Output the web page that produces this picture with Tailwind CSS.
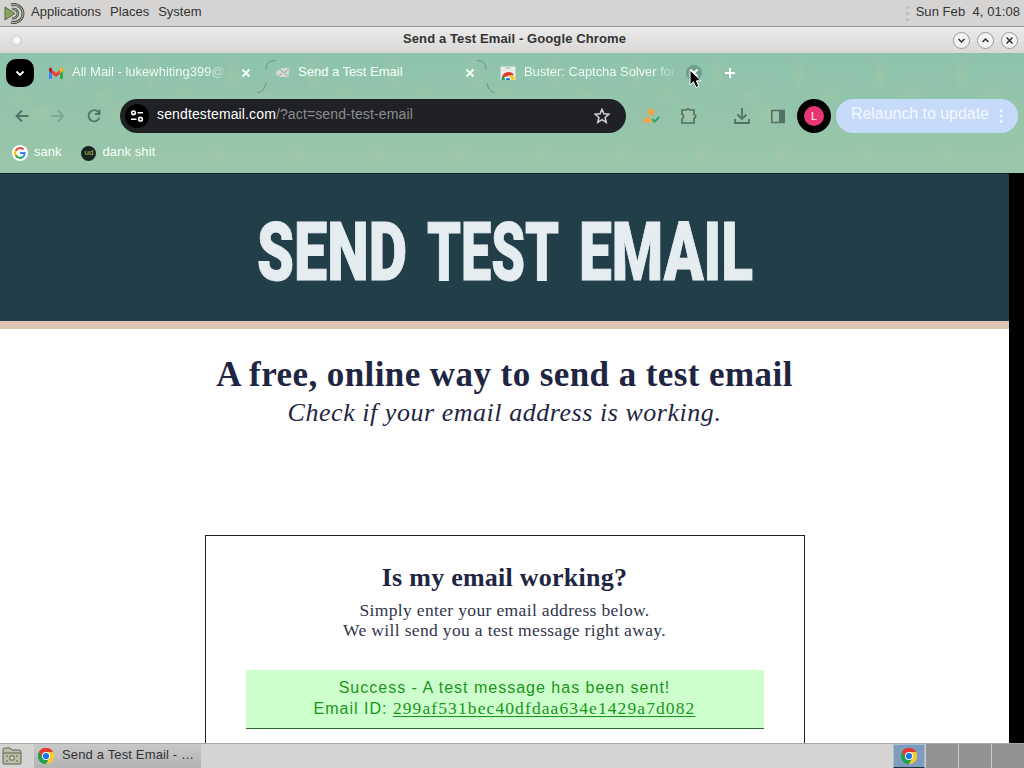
<!DOCTYPE html>
<html lang="en">
  <head>
    <meta charset="UTF-8" />
    <meta name="viewport" content="width=device-width, initial-scale=1.0" />
    <title>Send a Test Email</title>
    <script src="https://cdn.jsdelivr.net/npm/@tailwindcss/browser@4"></script>
  </head>
  <body class="flex h-[768px] w-[1024px] flex-col overflow-hidden bg-black font-['Liberation_Sans',sans-serif] text-[13px] text-[#333]">
    <!-- shared icons -->
    <svg class="hidden">
      <symbol id="chrome" viewBox="0 0 48 48">
        <path d="M24 24 3.2 12A24 24 0 0 1 44.8 12Z" fill="#e33b2e" />
        <path d="M24 24 44.8 12A24 24 0 0 1 24 48Z" fill="#fcc934" />
        <path d="M24 24V48A24 24 0 0 1 3.2 12Z" fill="#24a050" />
        <path d="M24 12H44.8A24 24 0 0 0 3.2 12L13.6 30Z" fill="#e33b2e" />
        <path d="M34.4 30 24 48A24 24 0 0 0 44.8 12H24Z" fill="#fcc934" />
        <path d="M13.6 30 3.2 12A24 24 0 0 0 24 48L34.4 30Z" fill="#24a050" />
        <circle cx="24" cy="24" r="12" fill="#fff" />
        <circle cx="24" cy="24" r="9.3" fill="#1a73e8" />
      </symbol>
      <symbol id="close" viewBox="0 0 10 10">
        <path d="M1.5 1.5 8.5 8.5M8.5 1.5 1.5 8.5" fill="none" stroke="currentColor" stroke-width="1.9" />
      </symbol>
    </svg>

    <!-- desktop panel -->
    <header class="flex h-[27px] shrink-0 items-center border-b border-[#979797] bg-[#d5d4d3] pr-1 pb-[3px] pl-1">
      <svg class="mt-[3px] mr-[6px] h-[21px] w-[21px]" viewBox="0 0 21 21" fill="none">
        <path d="M7 2A9 9 0 1 1 7 19" stroke="#4e5547" stroke-width="3" />
        <path d="M7 2A9 9 0 1 1 7 19" stroke="#b9c3a4" stroke-width="1" />
        <path d="M8 6.2A4.6 4.6 0 1 1 8 15" stroke="#4e5547" stroke-width="2.6" />
        <path d="M8 6.2A4.6 4.6 0 1 1 8 15" stroke="#b9c3a4" stroke-width=".8" />
        <path d="M1 4 11 10.5 1 17Z" fill="#87a556" stroke="#5c6550" />
      </svg>
      <nav class="flex gap-[9px]">
        <span>Applications</span>
        <span>Places</span>
        <span>System</span>
      </nav>
      <div class="mt-1 mr-[7px] ml-auto flex flex-col gap-[3px]">
        <i class="h-[3px] w-[3px] rounded-full bg-[#bbb]"></i>
        <i class="h-[3px] w-[3px] rounded-full bg-[#bbb]"></i>
        <i class="h-[3px] w-[3px] rounded-full bg-[#bbb]"></i>
      </div>
      <span class="tracking-[0.06px] whitespace-pre">Sun Feb  4, 01:08</span>
    </header>

    <!-- window title -->
    <div class="flex h-[26px] shrink-0 items-center bg-linear-to-b from-[#ebebea] to-[#d9d8d7] pr-[6px] pl-[11px]">
      <span class="flex h-[11px] w-[11px] items-center justify-center rounded-full border border-[#c9c9c9] bg-[#eee]"><i class="h-1 w-1 rounded-full bg-white"></i></span>
      <span class="ml-[54px] flex-1 pb-[2px] text-center font-bold tracking-[0.11px]">Send a Test Email - Google Chrome</span>
      <div class="flex gap-[7px]">
        <svg class="h-[17px] w-[17px]" viewBox="0 0 17 17" fill="none" stroke="#333" stroke-width="1.5"><circle cx="8.5" cy="8.5" r="8" fill="#f3f3f3" stroke="#999" stroke-width="1" /><path d="m5.5 7 3 3 3-3" /></svg>
        <svg class="h-[17px] w-[17px]" viewBox="0 0 17 17" fill="none" stroke="#333" stroke-width="1.5"><circle cx="8.5" cy="8.5" r="8" fill="#f3f3f3" stroke="#999" stroke-width="1" /><path d="m5.5 10 3-3 3 3" /></svg>
        <svg class="h-[17px] w-[17px]" viewBox="0 0 17 17" fill="none" stroke="#333" stroke-width="1.5"><circle cx="8.5" cy="8.5" r="8" fill="#f3f3f3" stroke="#999" stroke-width="1" /><path d="m5.5 5.5 6 6m0-6-6 6" /></svg>
      </div>
    </div>

    <div class="relative flex h-[120px] shrink-0 flex-col bg-linear-to-b from-[#8dc3ad] to-[#9bc6a9]">
      <!-- theme texture -->
      <svg class="absolute inset-0 h-full w-full opacity-30" viewBox="0 0 1024 120">
        <defs>
          <filter id="soft"><feGaussianBlur stdDeviation="4" /></filter>
          <pattern id="leaf" width="81" height="120" patternUnits="userSpaceOnUse">
            <g fill="#b9cd9c" filter="url(#soft)">
              <ellipse cx="70" cy="22" rx="4" ry="16" />
              <ellipse cx="55" cy="103" rx="8" ry="6" />
              <ellipse cx="40" cy="60" rx="10" ry="7" />
              <ellipse cx="20" cy="42" rx="9" ry="4" />
            </g>
          </pattern>
        </defs>
        <rect width="1024" height="120" fill="url(#leaf)" />
      </svg>

      <!-- tabs -->
      <div class="relative flex h-10 items-center pl-[6px] text-[#f6fffa]">
        <span class="flex h-7 w-7 items-center justify-center rounded-[10px] bg-black">
          <svg class="h-3 w-3" viewBox="0 0 12 12" fill="none" stroke="#fff" stroke-width="1.8"><path d="m2.5 4.5 3.5 3.5 3.5-3.5" /></svg>
        </span>
        <div class="ml-[14px] flex w-[202px] items-center">
          <svg class="h-[15px] w-4" viewBox="0 0 16 13">
            <path d="M1 12V2.5l3 2.2V12Z" fill="#4285f4" />
            <path d="M12 12V4.7l3-2.2V12Z" fill="#34a853" />
            <path d="M4 7V3l4 3 4-3v4l-4 3Z" fill="#ea4335" />
            <path d="M1 4V2.3C1 .8 2.6.5 3.6 1.3L4 1.6v4.6Z" fill="#b8232a" />
            <path d="M15 4V2.3c0-1.5-1.6-1.8-2.6-1l-.4.3v4.6Z" fill="#fbbc04" />
          </svg>
          <span class="ml-2 bg-linear-to-r from-[#f6fffa] from-88% to-[#f6fffa]/20 bg-clip-text pb-[3px] whitespace-nowrap text-transparent">All Mail - lukewhiting399@</span>
          <svg class="mr-[-1px] ml-auto h-[10px] w-[10px] shrink-0"><use href="#close" /></svg>
        </div>
        <svg class="ml-[14px] h-[36px] w-3 shrink-0 overflow-visible" viewBox="0 0 12 36" fill="none" stroke="#638c7b" stroke-width=".8"><path d="M11.5 5.5Q2 5.500 2 14M2 28Q1 36-7 38" /></svg>
        <div class="flex w-[200px] items-center">
          <svg class="h-[12px] w-[14px]" viewBox="0 0 14 12"><path d="M1 3h3l1-2h9l-2 9H2L0 7Z" fill="#d5d7d5" /><path d="m4 2.500 4 3.300L13 2M2 9.700l4-3.200m3 0 2.500 2.700" stroke="#91aaa1" fill="none" /></svg>
          <span class="ml-2 pb-[3px]">Send a Test Email</span>
          <svg class="mr-px ml-auto h-[10px] w-[10px]"><use href="#close" /></svg>
        </div>
        <svg class="ml-[1px] h-[36px] w-[18px] shrink-0 overflow-visible" viewBox="0 0 18 36" fill="none" stroke="#638c7b" stroke-width=".8"><path d="M0 5.500Q9 5.500 9 14M10 28Q11 36 18 38" /></svg>
        <div class="ml-[5px] flex w-[180px] items-center">
          <svg class="h-4 w-4" viewBox="0 0 16 16">
            <path d="M.5 1.500h15V15H.500Z" fill="#e8edeb" />
            <path d="M5.500 3h5" stroke="#a5b5ae" />
            <path d="M2 13a6.500 6.500 0 0 1 12-3L8 11Z" fill="#e33b2e" />
            <path d="M14.500 15a7 7 0 0 0-1-4.800H8L10.500 15Z" fill="#fcc934" />
            <path d="M1.500 15c0-1.800.3-3 1.200-4.200L6 15Z" fill="#24a050" />
            <path d="M5 15a3 3 0 1 1 6 0Z" fill="#fff" /><path d="M5.800 15a2.200 2.200 0 1 1 4.400 0Z" fill="#1a73e8" />
          </svg>
          <span class="ml-2 bg-linear-to-r from-[#f6fffa] from-85% to-[#f6fffa]/20 bg-clip-text pb-[3px] tracking-[-0.05px] whitespace-nowrap text-transparent">Buster: Captcha Solver for</span>
        </div>
        <span class="relative ml-[6px] flex h-4 w-4 items-center justify-center rounded-full bg-[#719e8d]">
          <svg class="h-[10px] w-[10px]"><use href="#close" /></svg>
          <!-- pointer -->
          <svg class="absolute top-[4px] left-[3px] z-10 h-[20px] w-[14px]" viewBox="0 0 14 20"><path d="M1 1v15l3.5-3.2L7 18.500l2.800-1.200-2.400-5.500h4.800Z" fill="#000" stroke="#fff" /></svg>
        </span>
        <svg class="ml-[22px] h-3 w-3" viewBox="0 0 12 12"><path d="M6 1v10M1 6h10" stroke="#fff" stroke-width="2" /></svg>
      </div>

      <!-- toolbar -->
      <div class="relative flex h-[46px] items-center pl-[14px] text-[#527265]">
        <svg class="h-4 w-4" viewBox="0 0 16 16" fill="none" stroke="currentColor" stroke-width="1.8"><path d="M14.500 8H2.500M8 2.500 2.500 8l5.500 5.500" /></svg>
        <svg class="ml-5 h-4 w-4 text-[#7da794]" viewBox="0 0 16 16" fill="none" stroke="currentColor" stroke-width="1.8"><path d="M1.500 8h12M8 2.500l5.500 5.500L8 13.500" /></svg>
        <svg class="ml-5 h-4 w-4" viewBox="0 0 16 16" fill="none" stroke="currentColor" stroke-width="1.8"><path d="M13.500 9.500A5.600 5.600 0 1 1 12.300 4L14 5.500M13.500 1.500V6H9" /></svg>
        <div class="ml-[18px] flex h-[34px] w-[506px] items-center rounded-full bg-[#202125] pl-[5px] text-sm">
          <span class="flex h-6 w-6 items-center justify-center rounded-full bg-black">
            <svg class="h-[14px] w-[14px]" viewBox="0 0 14 14" fill="none" stroke="#fff" stroke-width="1.6"><circle cx="3.5" cy="3.8" r="1.8" /><path d="M7.5 3.800H13M1 10.200h5.500" /><circle cx="10.500" cy="10.200" r="1.800" /></svg>
          </span>
          <span class="ml-2 pb-1 tracking-[0.13px] text-white">sendtestemail.com<span class="text-[#8c8d90]">/?act=send-test-email</span></span>
          <svg class="mr-4 ml-auto h-4 w-4" viewBox="0 0 16 16" fill="none" stroke="#d3d4d7" stroke-width="1.5"><path d="m8 1.200 1.900 4.600 4.900.4-3.700 3.200 1.200 4.900L8 11.700l-4.300 2.600 1.200-4.900L1.200 6.200l4.900-.4Z" /></svg>
        </div>
        <svg class="ml-[17px] h-4 w-[17px]" viewBox="0 0 17 16"><circle cx="8" cy="4" r="3.400" fill="#f2a34d" /><path d="M0 14.500c0-4 3-5.500 6-5.500l4 5.500Z" fill="#f2a34d" /><path d="m9 11 2.700 2.700L16.200 9" fill="none" stroke="#35a270" stroke-width="2" /></svg>
        <svg class="ml-5 h-[18px] w-[18px]" viewBox="0 0 18 18" fill="none" stroke="currentColor" stroke-width="1.7"><path d="M2 3h4.500q1.500-2.500 3 0H14v4.500q3.500 1.500 0 4V16H2v-4q3-2.500 0-5Z" /></svg>
        <svg class="ml-[35px] h-[18px] w-[18px]" viewBox="0 0 18 18" fill="none" stroke="currentColor" stroke-width="1.8"><path d="M9 1v11M4.500 7.500 9 12l4.500-4.500M2 12v4h14v-4" /></svg>
        <svg class="ml-[19px] h-[15px] w-[16px]" viewBox="0 0 16 15"><path d="M1.800 1.500h12.400v12H1.800Z" fill="none" stroke="currentColor" stroke-width="1.600" /><path d="M9 1h5v13H9Z" fill="currentColor" /></svg>
        <span class="ml-[11px] flex h-[34px] w-[34px] items-center justify-center rounded-full bg-black">
          <span class="flex h-5 w-5 items-center justify-center rounded-full bg-[#e73673] text-[11px] text-white">L</span>
        </span>
        <div class="ml-[5px] flex h-[34px] w-[182px] items-center rounded-full bg-[#c6dafa] pl-[15px] text-base text-[#f3f8ff]">
          <span class="pb-1 tracking-[-0.05px] whitespace-nowrap">Relaunch to update</span>
          <svg class="ml-[10px] h-4 w-1" viewBox="0 0 4 16" fill="#f3f8ff"><circle cx="2" cy="2.500" r="1.500" /><circle cx="2" cy="8" r="1.500" /><circle cx="2" cy="13.500" r="1.500" /></svg>
        </div>
      </div>

      <!-- bookmarks -->
      <div class="relative flex h-[28px] items-center pl-3 text-[#f6fffa]">
        <span class="flex h-4 w-4 items-center justify-center rounded-full bg-white">
          <svg class="h-3 w-3" viewBox="0 0 12 12" fill="none" stroke-width="2">
            <path d="M9.500 2.500A4.900 4.900 0 0 0 1.700 3.700" stroke="#ea4335" />
            <path d="M1.700 3.700a4.900 4.900 0 0 0 0 4.600" stroke="#fbbc04" />
            <path d="M1.700 8.300a4.900 4.900 0 0 0 7.300 1.600" stroke="#34a853" />
            <path d="M9 9.900A4.800 4.800 0 0 0 10.700 6H6" stroke="#4285f4" />
          </svg>
        </span>
        <span class="ml-[6px] pb-[3px]">sank</span>
        <span class="ml-5 flex h-[15px] w-[15px] items-center justify-center rounded-full bg-[#142420] pb-px text-[8px] text-[#bdc44c]">ud</span>
        <span class="ml-[6px] pb-[3px] tracking-[0.1px]">dank shit</span>
      </div>
    </div>

    <!-- page -->
    <main class="flex min-h-0 w-[1009px] flex-1 flex-col items-center overflow-hidden border-t border-[#0d2530] bg-white font-['Liberation_Serif',serif] text-[#1f2643]">
      <div class="flex h-[155px] w-full shrink-0 justify-center border-b-8 border-[#dfc4b4] bg-[#223e48]">
        <h1 class="h-full">
          <svg class="h-[147px] w-[500px] overflow-visible fill-[#e6edf1] stroke-[#e6edf1] stroke-1 font-['Roboto','Liberation_Sans',sans-serif] text-[82px] font-black" viewBox="0 0 500 147">
            <text x="2" y="105.500" textLength="150" lengthAdjust="spacingAndGlyphs">SEND</text>
            <text x="172" y="105.500" textLength="132" lengthAdjust="spacingAndGlyphs">TEST</text>
            <text x="324" y="105.500" textLength="174" lengthAdjust="spacingAndGlyphs">EMAIL</text>
          </svg>
        </h1>
      </div>
      <h2 class="mt-[26px] text-[35px] leading-10 font-bold tracking-[0.420px] whitespace-nowrap">A free, online way to send a test email</h2>
      <p class="text-[26px] leading-9 tracking-[0.540px] whitespace-nowrap italic">Check if your email address is working.</p>
      <section class="mt-[104px] flex h-[300px] w-[600px] shrink-0 flex-col items-center border border-[#222] px-10 pt-[26px] text-center">
        <h3 class="text-[26px] leading-8 font-bold tracking-[0.250px]">Is my email working?</h3>
        <p class="mt-[6px] text-[17.5px] leading-5 tracking-[0.350px] whitespace-nowrap text-[#30354a]">Simply enter your email address below.<br />We will send you a test message right away.</p>
        <div class="mt-[30px] h-[59px] w-full border-b border-[#2b6a2d] bg-[#ccffcc] pt-2 font-['Liberation_Sans',sans-serif] text-base leading-5 tracking-[1px] text-[#1b941b]">
          Success - A test message has been sent!<br />
          Email ID: <span class="font-['Liberation_Serif',serif] text-[17.5px] tracking-[1.100px] underline underline-offset-2">299af531bec40dfdaa634e1429a7d082</span>
        </div>
      </section>
    </main>

    <!-- taskbar -->
    <footer class="flex h-[25px] shrink-0 items-center border-t border-[#a7a7a7] bg-[#d5d4d3]">
      <svg class="ml-[2px] h-[20px] w-5" viewBox="0 0 20 20" fill="none" stroke="#5f6350"><path d="M1 17V4q0-2 2-2h5l2 2h7q2 0 2 2v11q0 1-1 1H2q-1 0-1-1Z" fill="#bdbfa9" /><path d="M1.500 7h17" /><path d="M8 10h4v4H8Z" fill="#dfe0d2" /><path d="M4 10h2m-2 5h2m8-5h2m-2 5h2" /></svg>
      <div class="ml-3 flex h-full w-[167px] items-center bg-linear-to-b from-[#c9c9c9] to-[#b3b3b3] pl-1">
        <svg class="h-4 w-4"><use href="#chrome" /></svg>
        <span class="ml-2 pb-[3px] tracking-[0.150px] whitespace-nowrap">Send a Test Email - …</span>
      </div>
      <div class="ml-auto flex h-full w-[131px] gap-px bg-[#ccc]">
        <span class="flex w-8 items-center justify-center border border-[#a5bed8] border-b-[#1d3448] bg-[#7e9cbd]"><svg class="h-4 w-4"><use href="#chrome" /></svg></span>
        <span class="w-8 bg-[#929292]"></span>
        <span class="w-8 bg-[#929292]"></span>
        <span class="w-8 bg-[#929292]"></span>
      </div>
    </footer>
  </body>
</html>
